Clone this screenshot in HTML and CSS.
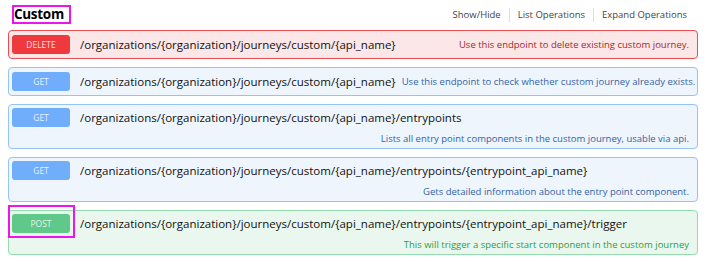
FILE: index.html
```html
<!DOCTYPE html>
<html>
<head>
<meta charset="utf-8">
<link rel="stylesheet" href="styles.css">
</head>
<body>
<div class="resource">
  <div class="res-head">
    <h2 class="title"><span class="mark">Custom</span></h2>
    <ul class="ops">
      <li>Show/Hide</li>
      <li>List Operations</li>
      <li>Expand Operations</li>
    </ul>
  </div>
  <div class="endpoints">
    <div class="op op-delete">
      <span class="verb">DELETE</span>
      <span class="path">/organizations/{organization}/journeys/custom/{api_name}</span>
      <span class="desc">Use this endpoint to delete existing custom journey.</span>
    </div>
    <div class="op op-get">
      <span class="verb">GET</span>
      <span class="path">/organizations/{organization}/journeys/custom/{api_name}</span>
      <span class="desc">Use this endpoint to check whether custom journey already exists.</span>
    </div>
    <div class="op op-get op-stacked">
      <span class="verb">GET</span>
      <span class="path">/organizations/{organization}/journeys/custom/{api_name}/entrypoints</span>
      <span class="desc">Lists all entry point components in the custom journey, usable via api.</span>
    </div>
    <div class="op op-get op-stacked">
      <span class="verb">GET</span>
      <span class="path">/organizations/{organization}/journeys/custom/{api_name}/entrypoints/{entrypoint_api_name}</span>
      <span class="desc">Gets detailed information about the entry point component.</span>
    </div>
    <div class="op op-post op-stacked">
      <span class="verb verb-marked">POST</span>
      <span class="path">/organizations/{organization}/journeys/custom/{api_name}/entrypoints/{entrypoint_api_name}/trigger</span>
      <span class="desc">This will trigger a specific start component in the custom journey</span>
    </div>
  </div>
</div>
</body>
</html>
```

FILE: styles.css
```css
html, body {
  margin: 0;
  padding: 0;
  background: #ffffff;
}

body {
  font-family: "Open Sans", "DejaVu Sans", sans-serif;
  color: #222;
}

.resource {
  padding: 5px 8px 0 8px;
}

.res-head {
  display: flex;
  align-items: flex-start;
  justify-content: space-between;
  height: 20px;
  margin-bottom: 5px;
}

.title {
  margin: 0 0 0 4px;
  font-size: 13.5px;
  font-weight: 700;
  line-height: 15px;
  color: #000;
}

.mark {
  display: inline-block;
  border: 2px solid #ee14ee;
  padding: 0 5px 0 0;
  height: 15px;
  line-height: 15px;
  letter-spacing: -0.3px;
}

.ops {
  display: flex;
  list-style: none;
  margin: 3px 11px 0 0;
  padding: 0;
  font-size: 9.5px;
  color: #444;
}

.ops li {
  padding: 0 8px;
  border-left: 1px solid #ddd;
  line-height: 14px;
}

.ops li:first-child {
  border-left: none;
}

.ops li:last-child {
  padding-right: 0;
}

.endpoints {
  display: flex;
  flex-direction: column;
  gap: 8px;
}

.op {
  display: flex;
  flex-wrap: nowrap;
  align-items: center;
  border: 1px solid;
  border-radius: 4px;
  padding: 3px 8px 3px 3px;
  min-height: 21px;
}

.op-stacked {
  flex-wrap: wrap;
  padding-bottom: 3px;
}

.verb {
  position: relative;
  display: inline-block;
  width: 58px;
  height: 19px;
  line-height: 19px;
  border-radius: 3px;
  text-align: center;
  font-size: 8.5px;
  color: rgba(255, 255, 255, 0.85);
  flex: none;
}

.path {
  margin-left: 10px;
  font-size: 11.5px;
  color: #111;
  white-space: nowrap;
}

.desc {
  margin-left: auto;
  padding-left: 6px;
  font-size: 9.5px;
  white-space: nowrap;
}

.op-stacked .desc {
  flex-basis: 100%;
  text-align: right;
  margin-top: 6px;
  line-height: 12px;
}

.op-delete {
  background: #fbe7e7;
  border-color: #ee4d50;
}

.op-delete .verb {
  background: #ee3a3c;
}

.op-delete .desc {
  color: #a8282c;
}

.op-get {
  background: #eef5fd;
  border-color: #95c3f5;
}

.op-get .verb {
  background: #70aefc;
}

.op-get .desc {
  color: #3462a8;
}

.op-post {
  background: #eaf7ee;
  border-color: #94dcad;
}

.op-post .verb {
  background: #60c98a;
}

.op-post .desc {
  color: #2e9e43;
}

.verb-marked::after {
  content: "";
  position: absolute;
  left: -4px;
  right: -5px;
  top: -9px;
  bottom: -5px;
  border: 2px solid #ee14ee;
}
```
